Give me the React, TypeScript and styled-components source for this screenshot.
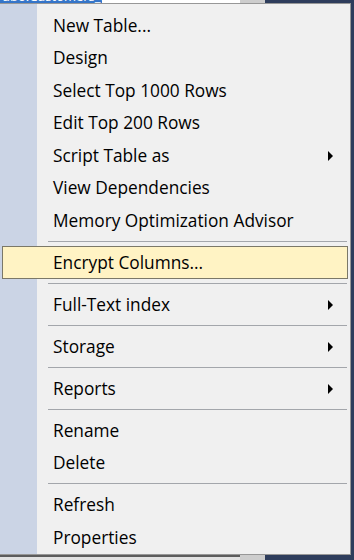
import React from 'react';
import styled, { createGlobalStyle } from 'styled-components';

const GlobalStyle = createGlobalStyle`
  html, body {
    margin: 0;
    padding: 0;
    background: #2e3d5c;
    overflow: hidden;
  }
`;

const Screen = styled.div`
  position: relative;
  width: 354px;
  height: 560px;
  display: flex;
  overflow: hidden;
`;

const Explorer = styled.div`
  width: 240px;
  display: flex;
  flex-direction: column;
  background: #ffffff;
`;

const SelectedNode = styled.div`
  width: 100px;
  height: 18px;
  margin-top: -13px;
  background: #3575c9;
  color: #ffffff;
  font-family: 'Open Sans', 'Noto Sans', sans-serif;
  font-size: 13px;
  line-height: 18px;
  padding-left: 2px;
  white-space: nowrap;
  overflow: hidden;
`;

const ExplorerBody = styled.div`
  flex: 1;
`;

const ExplorerFooter = styled.div`
  height: 3px;
  border-top: 2px solid #5c5c5c;
  background: #e2e2e2;
`;

const ScrollBar = styled.div`
  width: 25px;
  background: #cdcdcd;
`;

const Workspace = styled.div`
  flex: 1;
  background: #2e3d5c;
`;

const Menu = styled.div`
  position: absolute;
  top: 3px;
  left: -1px;
  width: 346px;
  border: 1px solid #979797;
  padding: 5px 2px 0.5px 2px;
  background: linear-gradient(to right, #cbd4e5 0 37px, #f0f0f0 37px);
`;

const Item = styled.div<{ $active?: boolean }>`
  height: 32.5px;
  display: flex;
  align-items: center;
  justify-content: space-between;
  box-sizing: border-box;
  padding: 0 14px 0 50px;
  font-family: 'Open Sans', 'Noto Sans', sans-serif;
  font-size: 17.3px;
  color: #000000;
  white-space: nowrap;
  border: 1px solid ${p => (p.$active ? '#7b7868' : 'transparent')};
  background: ${p => (p.$active ? '#fff3c4' : 'transparent')};
`;

const Arrow = styled.span`
  width: 0;
  height: 0;
  border-top: 5px solid transparent;
  border-bottom: 5px solid transparent;
  border-left: 5px solid #000000;
  margin-top: 1px;
`;

const Separator = styled.div`
  height: 9.5px;
  display: flex;
  align-items: center;
  padding-left: 46px;
  padding-right: 1px;

  &::after {
    content: '';
    flex: 1;
    height: 1px;
    background: #a3a6ab;
  }
`;

type Entry = { label: string; sub?: boolean; active?: boolean } | 'sep';

const entries: Entry[] = [
  { label: 'New Table...' },
  { label: 'Design' },
  { label: 'Select Top 1000 Rows' },
  { label: 'Edit Top 200 Rows' },
  { label: 'Script Table as', sub: true },
  { label: 'View Dependencies' },
  { label: 'Memory Optimization Advisor' },
  'sep',
  { label: 'Encrypt Columns...', active: true },
  'sep',
  { label: 'Full-Text index', sub: true },
  'sep',
  { label: 'Storage', sub: true },
  'sep',
  { label: 'Reports', sub: true },
  'sep',
  { label: 'Rename' },
  { label: 'Delete' },
  'sep',
  { label: 'Refresh' },
  { label: 'Properties' },
];

const App: React.FC = () => {
  return (
    <>
      <GlobalStyle />
      <Screen>
        <Explorer>
          <SelectedNode>dbo.Customers_test</SelectedNode>
          <ExplorerBody />
          <ExplorerFooter />
        </Explorer>
        <ScrollBar />
        <Workspace />
        <Menu>
          {entries.map((e, i) =>
            e === 'sep' ? (
              <Separator key={i} />
            ) : (
              <Item key={i} $active={e.active}>
                <span>{e.label}</span>
                {e.sub && <Arrow />}
              </Item>
            )
          )}
        </Menu>
      </Screen>
    </>
  );
};

export default App;
